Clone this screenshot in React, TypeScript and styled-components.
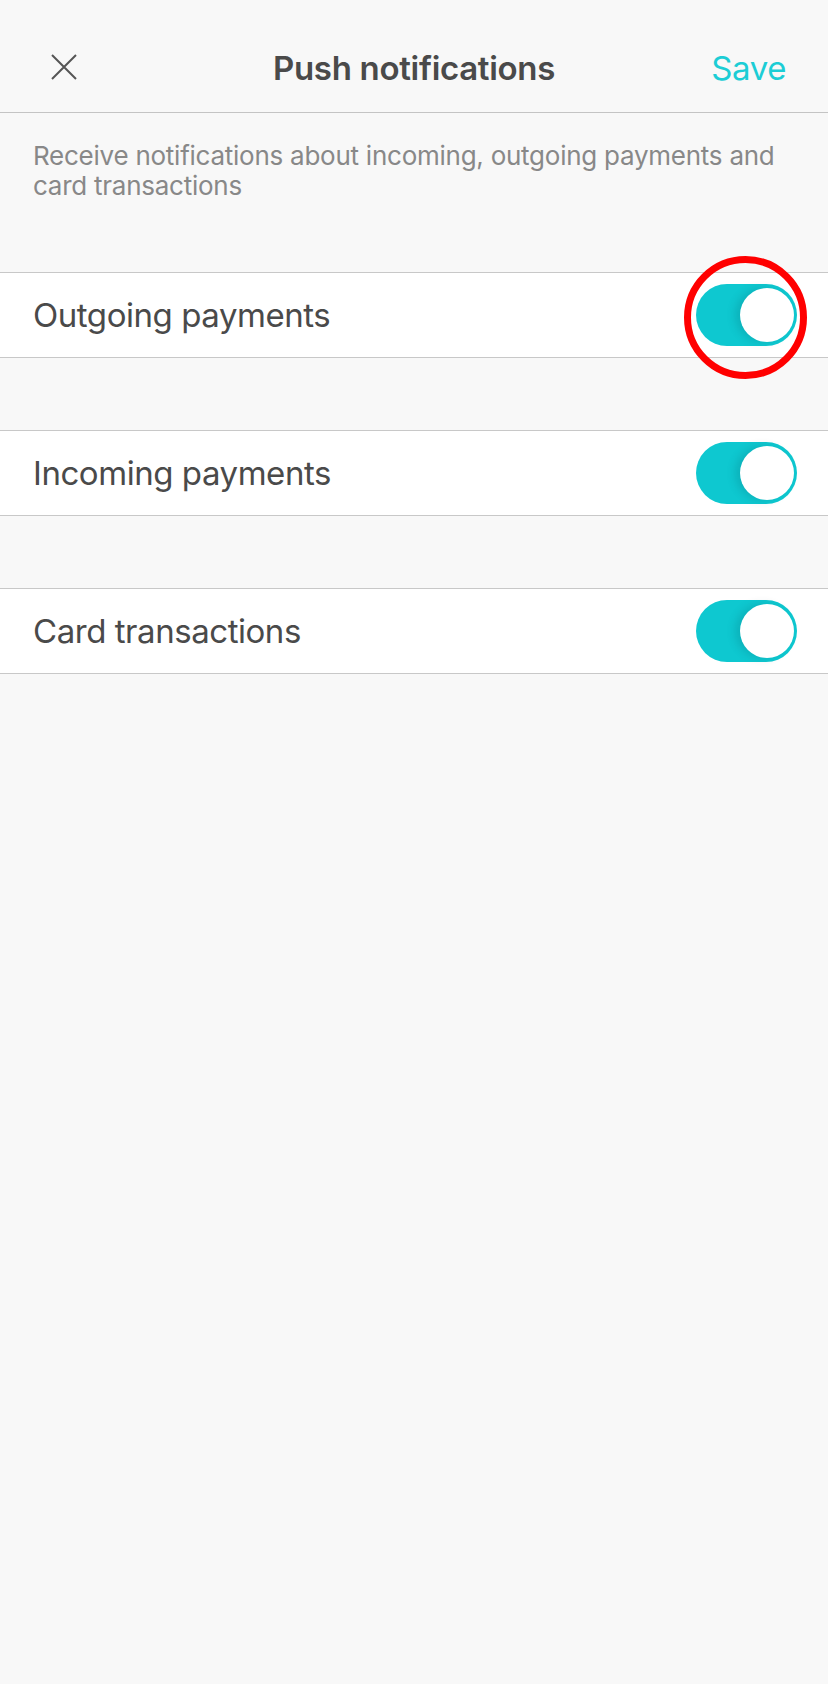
import React, { useState } from 'react'
import styled, { createGlobalStyle } from 'styled-components'

const GlobalStyle = createGlobalStyle`
    html, body {
        margin: 0;
        padding: 0;
        background: #f8f8f8;
    }
    body {
        font-family: Inter, "Noto Sans", "Liberation Sans", sans-serif;
        -webkit-font-smoothing: antialiased;
    }
`

type SettingType = {
    id: string
    title: string
    highlighted?: boolean
}

const settings: SettingType[] = [
    {id: 'outgoing', title: 'Outgoing payments', highlighted: true},
    {id: 'incoming', title: 'Incoming payments'},
    {id: 'card', title: 'Card transactions'},
]

export default function App() {
    const [enabled, setEnabled] = useState<Record<string, boolean>>({
        outgoing: true,
        incoming: true,
        card: true,
    })

    return (
        <>
            <GlobalStyle/>
            <Page>
                <Header>
                    <CloseButton aria-label={'close'}>
                        <svg width="26" height="26" viewBox="0 0 26 26">
                            <path d="M1 1 L25 25 M25 1 L1 25" stroke="#555" strokeWidth="2" fill="none"/>
                        </svg>
                    </CloseButton>
                    <Title>Push notifications</Title>
                    <SaveButton>Save</SaveButton>
                </Header>
                <Description>
                    Receive notifications about incoming, outgoing payments and card transactions
                </Description>
                {settings.map(setting => {
                    const isOn = enabled[setting.id]
                    return <Row key={setting.id}>
                        <RowTitle>{setting.title}</RowTitle>
                        <SwitchWrapper>
                            <Switch
                                $on={isOn}
                                onClick={() => setEnabled({...enabled, [setting.id]: !isOn})}
                            >
                                <Knob $on={isOn}/>
                            </Switch>
                            {setting.highlighted && <Marker/>}
                        </SwitchWrapper>
                    </Row>
                })}
            </Page>
        </>
    )
}

const Page = styled.div`
    width: 828px;
    min-height: 1684px;
    background: #f8f8f8;
    display: flex;
    flex-direction: column;
`

const Header = styled.header`
    height: 113px;
    box-sizing: border-box;
    padding: 24px 42px 0 38px;
    border-bottom: 1px solid #c4c4c4;
    display: flex;
    align-items: center;
    justify-content: space-between;
    position: relative;
`

const CloseButton = styled.button`
    width: 52px;
    height: 52px;
    border: none;
    background: transparent;
    padding: 0;
    display: flex;
    align-items: center;
    justify-content: center;
    margin-top: -3px;
`

const Title = styled.h1`
    position: absolute;
    left: 0;
    right: 0;
    top: 24px;
    bottom: 0;
    margin: 0;
    display: flex;
    align-items: center;
    justify-content: center;
    pointer-events: none;
    font-size: 33px;
    font-weight: 600;
    color: #4a4a4a;
    letter-spacing: -0.3px;
`

const SaveButton = styled.button`
    border: none;
    background: transparent;
    padding: 0;
    font-family: inherit;
    font-size: 33px;
    font-weight: 400;
    color: #1ccdd5;
    letter-spacing: -0.4px;
`

const Description = styled.p`
    margin: 0;
    padding: 28px 33px 71px 33px;
    font-size: 26px;
    line-height: 30px;
    color: #888888;
    letter-spacing: -0.25px;
`

const Row = styled.div`
    height: 86px;
    box-sizing: border-box;
    background: #ffffff;
    border-top: 1px solid #c8c8c8;
    border-bottom: 1px solid #c8c8c8;
    display: flex;
    align-items: center;
    justify-content: space-between;
    padding: 0 31px 0 33px;
    & + & {
        margin-top: 72px;
    }
`

const RowTitle = styled.span`
    font-size: 33px;
    color: #4a4a4a;
    letter-spacing: -0.45px;
`

const SwitchWrapper = styled.div`
    position: relative;
    width: 101px;
    height: 62px;
`

const Switch = styled.button<{ $on: boolean }>`
    width: 101px;
    height: 62px;
    border-radius: 31px;
    border: none;
    padding: 0;
    background: ${props => props.$on ? '#0ec8d0' : '#e5e5ea'};
    position: relative;
    cursor: pointer;
`

const Knob = styled.span<{ $on: boolean }>`
    position: absolute;
    top: 4px;
    left: ${props => props.$on ? '44px' : '4px'};
    width: 54px;
    height: 54px;
    border-radius: 50%;
    background: #ffffff;
    box-shadow: -5px 0 8px rgba(0, 80, 90, 0.18);
`

const Marker = styled.span`
    position: absolute;
    left: -12px;
    top: -28px;
    width: 123px;
    height: 123px;
    box-sizing: border-box;
    border: 7px solid #ff0000;
    border-radius: 50%;
    pointer-events: none;
`
